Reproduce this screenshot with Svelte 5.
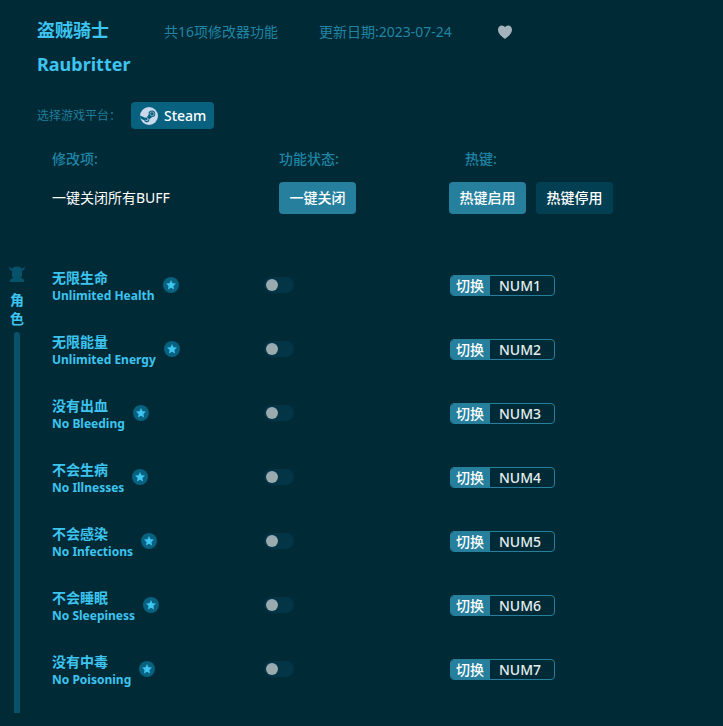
<script>
  let liked = $state(false);
  let hotkeys = $state(true);
  let options = $state([
    { zh: '无限生命', en: 'Unlimited Health', key: 'NUM1', on: false },
    { zh: '无限能量', en: 'Unlimited Energy', key: 'NUM2', on: false },
    { zh: '没有出血', en: 'No Bleeding', key: 'NUM3', on: false },
    { zh: '不会生病', en: 'No Illnesses', key: 'NUM4', on: false },
    { zh: '不会感染', en: 'No Infections', key: 'NUM5', on: false },
    { zh: '不会睡眠', en: 'No Sleepiness', key: 'NUM6', on: false },
    { zh: '没有中毒', en: 'No Poisoning', key: 'NUM7', on: false }
  ]);

  function closeAll() {
    for (const option of options) option.on = false;
  }
</script>

<main>
  <header>
    <h1><span>盗贼骑士</span><span>Raubritter</span></h1>
    <p class="count">共16项修改器功能</p>
    <p class="date">更新日期:2023-07-24</p>
    <button class="heart" class:liked aria-label="收藏" aria-pressed={liked} onclick={() => (liked = !liked)}>
      <svg viewBox="0 0 14 14" width="14" height="14" aria-hidden="true">
        <path d="M7 13.8C5.700 13 0 9.300 0 4.700C0 2.200 1.700.5 3.800.5C5.200.5 6.400 1.200 7 2.300C7.600 1.200 8.800.5 10.200.5C12.300.5 14 2.200 14 4.700C14 9.300 8.300 13 7 13.800Z" />
      </svg>
    </button>
  </header>

  <section class="platform">
    <span>选择游戏平台：</span>
    <button class="steam">
      <svg viewBox="0 0 18 18" width="18" height="18" aria-hidden="true">
        <circle cx="9" cy="9" r="9" fill="#c9d8ea" />
        <path d="M0 8.600L5.200 10.800A2.600 2.600 0 0 1 6.700 10.400L8.700 7.400A3.300 3.300 0 1 1 12.200 10.100L9.300 12.300A2.600 2.600 0 0 1 4.200 13.300L.7 11.800A9 9 0 0 1 0 8.600Z" fill="#07617f" />
        <circle cx="12" cy="6.800" r="2" fill="none" stroke="#c9d8ea" stroke-width=".6" />
        <path d="M4.800 12.600L6 13.100A1.200 1.200 0 0 0 7 10.900L6 10.500A2 2 0 0 1 8.600 12.400A2 2 0 0 1 4.800 12.600Z" fill="#c9d8ea" />
      </svg>
      Steam
    </button>
  </section>

  <section class="columns heads">
    <h2>修改项:</h2>
    <h2>功能状态:</h2>
    <h2>热键:</h2>
  </section>

  <section class="columns master">
    <span>一键关闭所有BUFF</span>
    <div><button class="action" onclick={closeAll}>一键关闭</button></div>
    <div class="pair">
      <button class="action" class:off={!hotkeys} onclick={() => (hotkeys = true)}>热键启用</button>
      <button class="action" class:off={hotkeys} onclick={() => (hotkeys = false)}>热键停用</button>
    </div>
  </section>

  <section class="group">
    <aside>
      <svg viewBox="0 0 16 16" width="16" height="16" aria-hidden="true">
        <path d="M.8 0C-.2 2 .1 4.400 3 4.800V9.500C3 10.500 3.600 11.200 4.200 11.800C3.600 12.800 1 12.600.8 14.200V16H15.200V14.200C15 12.600 12.400 12.800 11.800 11.800C12.400 11.200 13 10.500 13 9.500V4.800C15.900 4.400 16.200 2 15.200 0C15.100 1.600 14.200 2.400 12.600 2.400C11.600 1 10 .4 8 .4C6 .4 4.400 1 3.400 2.400C1.800 2.400.9 1.600.8 0Z" fill="#07526a" />
      </svg>
      <h3>角色</h3>
      <div class="bar"></div>
    </aside>
    <ul>
      {#each options as option (option.key)}
        <li class="columns">
          <div class="name">
            <label for={option.key}><span>{option.zh}</span><span class="en">{option.en}</span></label>
            <svg viewBox="0 0 16 16" width="16" height="16" aria-hidden="true">
              <circle cx="8" cy="8" r="8" fill="#07617f" />
              <path d="M8 3L9.500 6.200L13 6.600L10.400 9L11.100 12.600L8 10.800L4.900 12.600L5.600 9L3 6.600L6.500 6.200Z" fill="#3dc4f0" />
            </svg>
          </div>
          <div class="state"><input id={option.key} type="checkbox" role="switch" bind:checked={option.on} /></div>
          <div>
            <button class="hotkey" onclick={() => (option.on = !option.on)}>
              <span class="toggle">切换</span><span class="key">{option.key}</span>
            </button>
          </div>
        </li>
      {/each}
    </ul>
  </section>
</main>

<style>
  :global(body) {
    margin: 0;
    background: #002a35;
  }
  main {
    color: #3dc4f0;
    font: 14px/20px 'Noto Sans', 'Noto Sans CJK SC', sans-serif;
    padding: 13px 0;
  }
  h1, h2, h3, p, ul {
    margin: 0;
    padding: 0;
  }
  button {
    border: 0;
    padding: 0;
    margin: 0;
    font: inherit;
    color: #fff;
    background: none;
    cursor: pointer;
  }
  svg {
    display: block;
    flex: none;
  }
  header {
    display: flex;
    align-items: flex-start;
    padding-left: 37px;
    color: #1f85a5;
    line-height: 38px;
  }
  h1 {
    width: 127px;
    font-size: 18px;
    line-height: 34px;
    color: #3dc4f0;
  }
  h1 span {
    display: block;
  }
  .count {
    width: 155px;
  }
  .date {
    width: 179px;
  }
  .heart {
    padding-top: 12px;
  }
  .heart path {
    fill: #a3b4bd;
  }
  .heart.liked path {
    fill: #3dc4f0;
  }
  .platform {
    display: flex;
    align-items: center;
    gap: 10px;
    margin-top: 21px;
    padding-left: 37px;
    font-size: 12px;
    color: #1f7d9b;
  }
  .steam {
    display: flex;
    align-items: center;
    gap: 6px;
    height: 27px;
    padding: 0 8px 0 9px;
    border-radius: 4px;
    background: #07617f;
    font-size: 14px;
    font-weight: 500;
  }
  .columns {
    display: grid;
    grid-template-columns: 227px 170px 1fr;
    align-items: center;
  }
  .heads,
  .master {
    padding-left: 52px;
  }
  .heads {
    margin-top: 20px;
  }
  h2 {
    font-size: 14px;
    font-weight: 500;
    line-height: 20px;
    color: #1f85a5;
  }
  h2:last-child {
    padding-left: 16px;
  }
  .master {
    margin-top: 13px;
    color: #fff;
  }
  .pair {
    display: flex;
    gap: 10px;
  }
  .action {
    min-width: 77px;
    height: 32px;
    padding: 0 10px;
    border-radius: 4px;
    background: #267f9c;
    font-weight: 500;
  }
  .action.off {
    background: #033f53;
  }
  .group {
    display: flex;
    margin-top: 39px;
  }
  aside {
    display: flex;
    flex-direction: column;
    align-items: center;
    width: 34px;
    padding-top: 13px;
  }
  h3 {
    width: 14px;
    margin-top: 8px;
    font-size: 14px;
    line-height: 19px;
  }
  .bar {
    width: 6px;
    flex: 1;
    margin-top: 4px;
    border-radius: 3px 3px 0 0;
    background: #07526a;
  }
  ul {
    flex: 1;
    padding: 0 0 12px 18px;
    list-style: none;
  }
  li {
    height: 64px;
  }
  .name {
    display: flex;
    align-items: center;
    gap: 8px;
  }
  label {
    padding-top: 4px;
  }
  label span {
    display: block;
    font-weight: 700;
    line-height: 18px;
  }
  label .en {
    font-size: 12px;
  }
  .state {
    display: flex;
    margin-left: -15px;
  }
  input {
    appearance: none;
    display: flex;
    align-items: center;
    width: 30px;
    height: 16px;
    margin: 0;
    padding: 0 2px;
    box-sizing: border-box;
    border-radius: 8px;
    background: #033546;
    cursor: pointer;
  }
  input::before {
    content: '';
    width: 12px;
    height: 12px;
    border-radius: 50%;
    background: #9aabb0;
  }
  input:checked {
    justify-content: flex-end;
    background: #267f9c;
  }
  .hotkey {
    display: flex;
    width: 105px;
    height: 21px;
    margin-left: 1px;
    border: 1px solid #267f9c;
    border-radius: 4px;
    line-height: 19px;
    overflow: hidden;
  }
  .toggle {
    padding: 0 6px 0 5px;
    background: #267f9c;
    font-weight: 500;
  }
  .key {
    padding-left: 9px;
    color: #e6eef0;
    font-weight: 500;
  }
</style>
